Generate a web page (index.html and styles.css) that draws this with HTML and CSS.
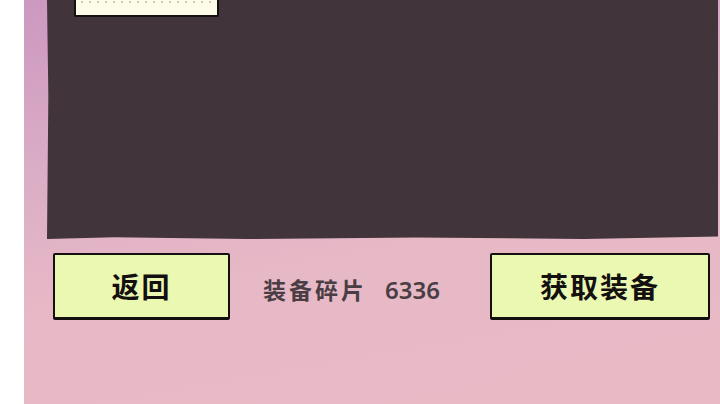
FILE: index.html
```html
<!DOCTYPE html>
<html>
  <head>
    <title>装备</title>
    <meta charset="UTF-8">
    <link rel="stylesheet" href="styles.css">
  </head>
  <body>
    <div class="screen">
      <div class="board">
        <div class="note"></div>
      </div>
      <div class="bar">
        <div class="btn back">返回</div>
        <div class="shards">装备碎片<span class="count">6336</span></div>
        <div class="btn get">获取装备</div>
      </div>
    </div>
  </body>
</html>
```

FILE: styles.css
```css
html {
  height: 100%;
  background: white;
}
body {
  margin: 0;
  height: 100%;
  overflow: hidden;
  font-family: "Noto Sans CJK SC", "Noto Sans", sans-serif;
}
.screen {
  margin-left: 24px;
  height: 404px;
  display: flex;
  flex-direction: column;
  background: linear-gradient(170deg, #cc98c0 0%, #dcaec6 35%, #e7b9c6 60%, #e8bac6 100%);
}
.board {
  height: 239px;
  margin-left: 23px;
  margin-right: 2px;
  background: #41343a;
  clip-path: polygon(0 0, 100% 0, 100% 99%, 80% 100%, 55% 99.4%, 30% 100%, 10% 99.3%, 0 100%, 0.2% 40%);
}
.note {
  margin-left: 27px;
  width: 141px;
  height: 15px;
  background-color: #fdfce9;
  background-image: radial-gradient(circle, #cfcab6 0.8px, transparent 1.2px);
  background-size: 8px 4px;
  background-position: 2px 0;
  background-repeat: repeat-x;
  border: 2px solid #151111;
  border-top: none;
  border-radius: 0 0 2px 2px;
}
.bar {
  display: flex;
  align-items: center;
  margin-top: 14px;
  padding-left: 29px;
  padding-right: 10px;
}
.btn {
  height: 62px;
  box-sizing: content-box;
  border: 2px solid #141010;
  border-bottom-width: 3px;
  border-radius: 2px;
  background: #eaf8b2;
  color: #141010;
  font-size: 28px;
  font-weight: bold;
  letter-spacing: 2px;
  display: flex;
  align-items: center;
  justify-content: center;
}
.back {
  width: 173px;
}
.get {
  width: 216px;
  margin-left: auto;
}
.shards {
  margin-left: 33px;
  margin-top: 4px;
  font-size: 23px;
  font-weight: bold;
  color: #4a3e44;
  letter-spacing: 3px;
}
.count {
  margin-left: 18px;
  font-family: "Noto Sans", sans-serif;
  font-size: 24px;
  font-weight: 600;
  letter-spacing: 0;
}
```
